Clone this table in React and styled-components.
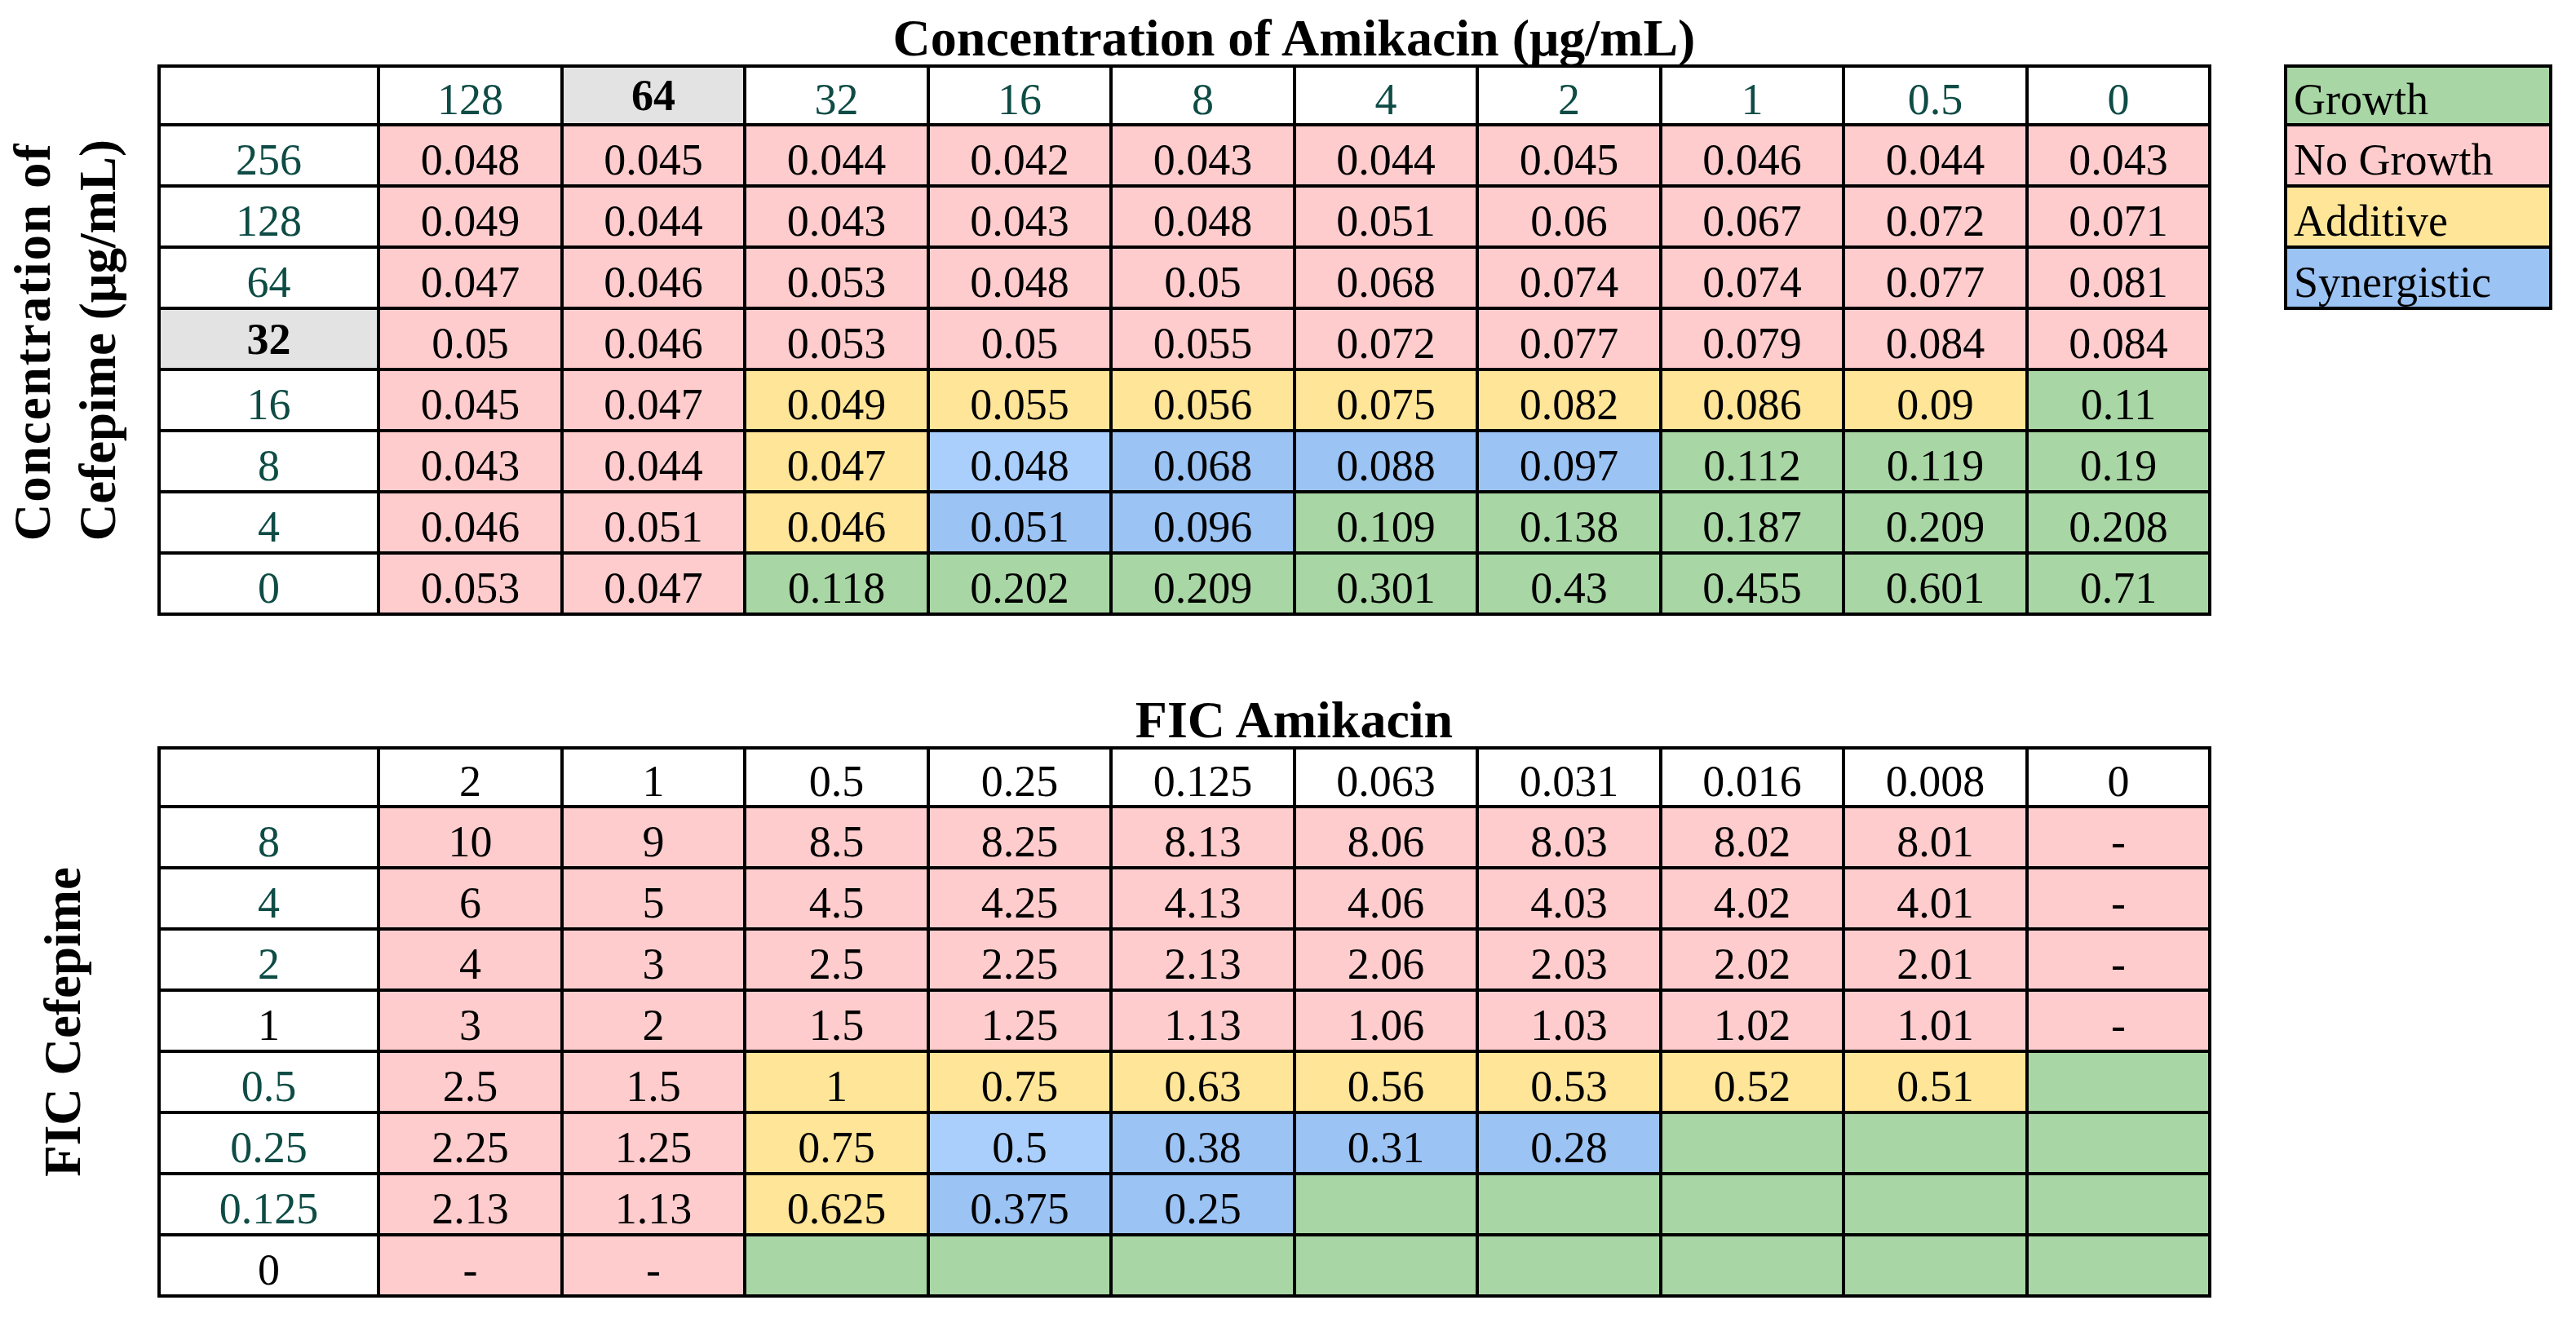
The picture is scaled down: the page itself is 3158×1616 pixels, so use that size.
import React from "react"
import styled, { createGlobalStyle } from "styled-components"

const FIRST_COL = 265
const LINE = 4

const fills = {
  W: "#ffffff",
  H: "#e3e3e3",
  P: "#ffcccd",
  G: "#a8d6a4",
  Y: "#ffe598",
  B: "#9bc3f4",
  L: "#aacffc"
}

const TEAL = "#0e4c45"

const GlobalStyle = createGlobalStyle`
  html, body {
    margin: 0;
    padding: 0;
    background: #ffffff;
  }
  body {
    font-family: "Liberation Serif", "Times New Roman", serif;
    color: #000000;
  }
`

const Page = styled.main`
  display: flex;
  flex-direction: column;
  row-gap: 96px;
  padding-top: 15px;
  width: 3158px;
`

const Section = styled.section`
  display: grid;
  grid-template-columns: 193px max-content max-content;
  grid-template-rows: 64px auto;
  justify-content: start;
  align-items: start;
`

const Title = styled.h2`
  grid-column: 2;
  grid-row: 1;
  margin: 0;
  padding-left: ${FIRST_COL + LINE}px;
  font-size: 64px;
  line-height: 64px;
  font-weight: bold;
  text-align: center;
  white-space: nowrap;
`

const LabelCell = styled.div`
  grid-column: 1;
  grid-row: 2;
  align-self: center;
  display: flex;
  padding-left: ${(p) => p.$inset}px;
`

const VerticalText = styled.div`
  writing-mode: vertical-rl;
  text-orientation: sideways;
  transform: rotate(180deg);
  font-size: 63px;
  line-height: 80px;
  font-weight: bold;
  white-space: nowrap;
`

const Spaced = styled.span`
  letter-spacing: 2px;
`

const Grid = styled.div`
  grid-column: 2;
  grid-row: 2;
  justify-self: start;
  display: grid;
  grid-template-columns: ${FIRST_COL}px repeat(5, 221px 220px);
  grid-template-rows: 68px repeat(8, 71px);
  gap: ${LINE}px;
  padding: ${LINE}px;
  background: #000000;
`

const Cell = styled.div`
  display: flex;
  align-items: center;
  justify-content: center;
  padding-top: ${(p) => (p.$bold ? 0 : 10)}px;
  background: ${(p) => fills[p.$fill || "W"]};
  color: ${(p) => (p.$teal ? TEAL : "#000000")};
  font-size: 54px;
  font-weight: ${(p) => (p.$bold ? "bold" : "normal")};
  white-space: nowrap;
`

const Legend = styled.div`
  grid-column: 3;
  grid-row: 2;
  justify-self: start;
  margin-left: 89px;
  display: grid;
  grid-template-columns: 321px;
  grid-template-rows: 68px repeat(3, 71px);
  gap: ${LINE}px;
  padding: ${LINE}px;
  background: #000000;
`

const LegendItem = styled.div`
  display: flex;
  align-items: center;
  padding: 10px 0 0 8px;
  background: ${(p) => fills[p.$fill]};
  font-size: 54px;
  white-space: nowrap;
`

const split = (s) => s.split(" ").map((v) => (v === "_" ? "" : v))

const mic = {
  header: split("128 64 32 16 8 4 2 1 0.5 0"),
  boldCol: 1,
  headerTeal: true,
  rows: [
    { label: "256", teal: true, values: split("0.048 0.045 0.044 0.042 0.043 0.044 0.045 0.046 0.044 0.043"), fill: "PPPPPPPPPP" },
    { label: "128", teal: true, values: split("0.049 0.044 0.043 0.043 0.048 0.051 0.06 0.067 0.072 0.071"), fill: "PPPPPPPPPP" },
    { label: "64", teal: true, values: split("0.047 0.046 0.053 0.048 0.05 0.068 0.074 0.074 0.077 0.081"), fill: "PPPPPPPPPP" },
    { label: "32", bold: true, values: split("0.05 0.046 0.053 0.05 0.055 0.072 0.077 0.079 0.084 0.084"), fill: "PPPPPPPPPP" },
    { label: "16", teal: true, values: split("0.045 0.047 0.049 0.055 0.056 0.075 0.082 0.086 0.09 0.11"), fill: "PPYYYYYYYG" },
    { label: "8", teal: true, values: split("0.043 0.044 0.047 0.048 0.068 0.088 0.097 0.112 0.119 0.19"), fill: "PPYLBBBGGG" },
    { label: "4", teal: true, values: split("0.046 0.051 0.046 0.051 0.096 0.109 0.138 0.187 0.209 0.208"), fill: "PPYBBGGGGG" },
    { label: "0", teal: true, values: split("0.053 0.047 0.118 0.202 0.209 0.301 0.43 0.455 0.601 0.71"), fill: "PPGGGGGGGG" }
  ]
}

const fic = {
  header: split("2 1 0.5 0.25 0.125 0.063 0.031 0.016 0.008 0"),
  boldCol: -1,
  headerTeal: false,
  rows: [
    { label: "8", teal: true, values: split("10 9 8.5 8.25 8.13 8.06 8.03 8.02 8.01 -"), fill: "PPPPPPPPPP" },
    { label: "4", teal: true, values: split("6 5 4.5 4.25 4.13 4.06 4.03 4.02 4.01 -"), fill: "PPPPPPPPPP" },
    { label: "2", teal: true, values: split("4 3 2.5 2.25 2.13 2.06 2.03 2.02 2.01 -"), fill: "PPPPPPPPPP" },
    { label: "1", values: split("3 2 1.5 1.25 1.13 1.06 1.03 1.02 1.01 -"), fill: "PPPPPPPPPP" },
    { label: "0.5", teal: true, values: split("2.5 1.5 1 0.75 0.63 0.56 0.53 0.52 0.51 _"), fill: "PPYYYYYYYG" },
    { label: "0.25", teal: true, values: split("2.25 1.25 0.75 0.5 0.38 0.31 0.28 _ _ _"), fill: "PPYLBBBGGG" },
    { label: "0.125", teal: true, values: split("2.13 1.13 0.625 0.375 0.25 _ _ _ _ _"), fill: "PPYBBGGGGG" },
    { label: "0", values: split("- - _ _ _ _ _ _ _ _"), fill: "PPGGGGGGGG" }
  ]
}

const legend = [
  { text: "Growth", fill: "G" },
  { text: "No Growth", fill: "P" },
  { text: "Additive", fill: "Y" },
  { text: "Synergistic", fill: "B" }
]

const Table = ({ data }) => (
  <Grid>
    <Cell />
    {data.header.map((h, i) => (
      <Cell
        key={`h${i}`}
        $bold={i === data.boldCol}
        $fill={i === data.boldCol ? "H" : "W"}
        $teal={data.headerTeal && i !== data.boldCol}
      >
        {h}
      </Cell>
    ))}
    {data.rows.map((row) => (
      <React.Fragment key={row.label}>
        <Cell $bold={row.bold} $fill={row.bold ? "H" : "W"} $teal={row.teal}>
          {row.label}
        </Cell>
        {row.values.map((v, i) => (
          <Cell key={i} $fill={row.fill[i]}>
            {v}
          </Cell>
        ))}
      </React.Fragment>
    ))}
  </Grid>
)

const App = () => {
  return (
    <>
      <GlobalStyle />
      <Page>
        <Section>
          <Title>Concentration of Amikacin (μg/mL)</Title>
          <LabelCell $inset={0}>
            <VerticalText>
              <Spaced>Concentration of</Spaced>
              <br />
              Cefepime (μg/mL)
            </VerticalText>
          </LabelCell>
          <Table data={mic} />
          <Legend>
            {legend.map((l) => (
              <LegendItem key={l.text} $fill={l.fill}>
                {l.text}
              </LegendItem>
            ))}
          </Legend>
        </Section>
        <Section>
          <Title>FIC Amikacin</Title>
          <LabelCell $inset={37}>
            <VerticalText>FIC Cefepime</VerticalText>
          </LabelCell>
          <Table data={fic} />
        </Section>
      </Page>
    </>
  )
}

export default App
